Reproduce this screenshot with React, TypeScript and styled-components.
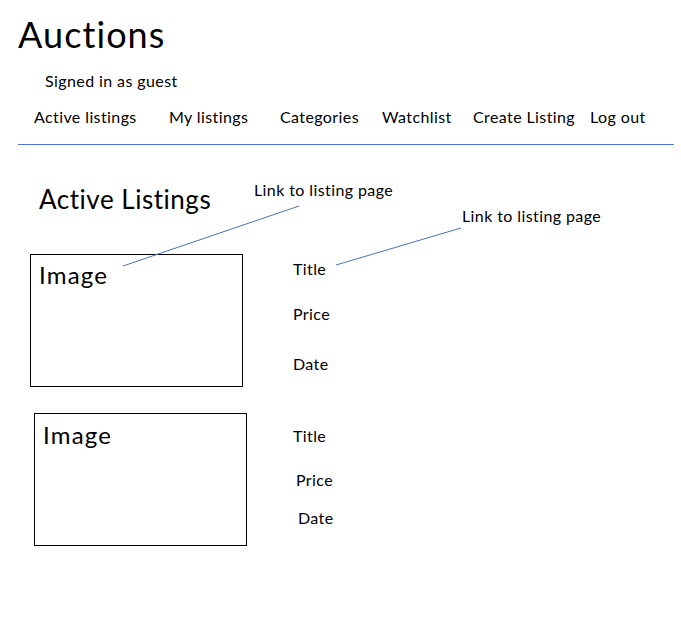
import styled, { createGlobalStyle } from 'styled-components'

const GlobalStyle = createGlobalStyle`
  body {
    margin: 0;
    background: #fff;
    color: #000;
    font-family: Lato, 'Open Sans', sans-serif;
    letter-spacing: 0.025em;
  }
`;

const Page = styled.div`
  position: relative;
  width: 681px;
  min-height: 617px;
`;

const Header = styled.header`
  margin: 0 7px 0 18px;
  padding: 13px 0 18px;
  border-bottom: 1px solid #4a78c8;
`;

const SiteTitle = styled.h1`
  margin: 0;
  font-size: 36px;
  line-height: 43px;
  font-weight: 400;
  letter-spacing: 0.03em;
`;

const SignedIn = styled.div`
  margin-top: 15px;
  padding-left: 27px;
  font-size: 16px;
  line-height: 19px;
`;

const Nav = styled.nav`
  display: grid;
  grid-template-columns: 135px 111px 102px 91px 117px auto;
  margin-top: 17px;
  padding-left: 16px;
`;

const NavLink = styled.a`
  font-size: 16px;
  line-height: 19px;
  color: #000;
  text-decoration: none;
  white-space: nowrap;
`;

const Main = styled.main`
  padding-top: 39px;
`;

const Heading = styled.h2`
  margin: 0 0 39px 39px;
  font-size: 26px;
  line-height: 31px;
  font-weight: 400;
  letter-spacing: 0.02em;
`;

const Listings = styled.div`
  display: flex;
  flex-direction: column;
  gap: 26px;
`;

const Row = styled.div<{ $left: number }>`
  display: flex;
  align-items: flex-start;
  padding-left: ${p => p.$left}px;
`;

const ImageBox = styled.div<{ $top: number }>`
  box-sizing: border-box;
  width: 213px;
  height: 133px;
  border: 1px solid #000;
  padding: ${p => p.$top}px 8px 0;
  font-size: 24px;
  line-height: 29px;
  letter-spacing: 0.05em;
`;

const Details = styled.div<{ $gap: number }>`
  display: flex;
  flex-direction: column;
  margin-left: ${p => p.$gap}px;
`;

const Field = styled.div<{ $top: number; $indent: number }>`
  margin-top: ${p => p.$top}px;
  padding-left: ${p => p.$indent}px;
  font-size: 16px;
  line-height: 19px;
`;

const Callout = styled.div<{ $x: number; $y: number }>`
  position: absolute;
  left: ${p => p.$x}px;
  top: ${p => p.$y}px;
  font-size: 16px;
  line-height: 19px;
  white-space: nowrap;
`;

const CalloutLines = styled.svg`
  position: absolute;
  top: 0;
  left: 0;
  pointer-events: none;
`;

const navItems = ['Active listings', 'My listings', 'Categories', 'Watchlist', 'Create Listing', 'Log out'];

const listings = [
  {
    left: 30,
    imageTop: 5,
    gap: 50,
    fields: [
      { label: 'Title', top: 5, indent: 0 },
      { label: 'Price', top: 26, indent: 0 },
      { label: 'Date', top: 31, indent: 0 },
    ],
  },
  {
    left: 34,
    imageTop: 6,
    gap: 46,
    fields: [
      { label: 'Title', top: 13, indent: 0 },
      { label: 'Price', top: 25, indent: 3 },
      { label: 'Date', top: 19, indent: 5 },
    ],
  },
];

function App() {
  return (
    <Page>
      <GlobalStyle />
      <Header>
        <SiteTitle>Auctions</SiteTitle>
        <SignedIn>Signed in as guest</SignedIn>
        <Nav>
          {navItems.map(item => (
            <NavLink key={item} href="#">{item}</NavLink>
          ))}
        </Nav>
      </Header>
      <Main>
        <Heading>Active Listings</Heading>
        <Listings>
          {listings.map((l, i) => (
            <Row key={i} $left={l.left}>
              <ImageBox $top={l.imageTop}>Image</ImageBox>
              <Details $gap={l.gap}>
                {l.fields.map(f => (
                  <Field key={f.label} $top={f.top} $indent={f.indent}>{f.label}</Field>
                ))}
              </Details>
            </Row>
          ))}
        </Listings>
      </Main>

      {/* wireframe annotations */}
      <Callout $x={254} $y={180}>Link to listing page</Callout>
      <Callout $x={462} $y={206}>Link to listing page</Callout>
      <CalloutLines width={681} height={617}>
        <line x1={299} y1={206} x2={123} y2={266} stroke="#4472c4" strokeWidth={1} />
        <line x1={461} y1={228} x2={336} y2={265} stroke="#4472c4" strokeWidth={1} />
      </CalloutLines>
    </Page>
  )
}

export default App
